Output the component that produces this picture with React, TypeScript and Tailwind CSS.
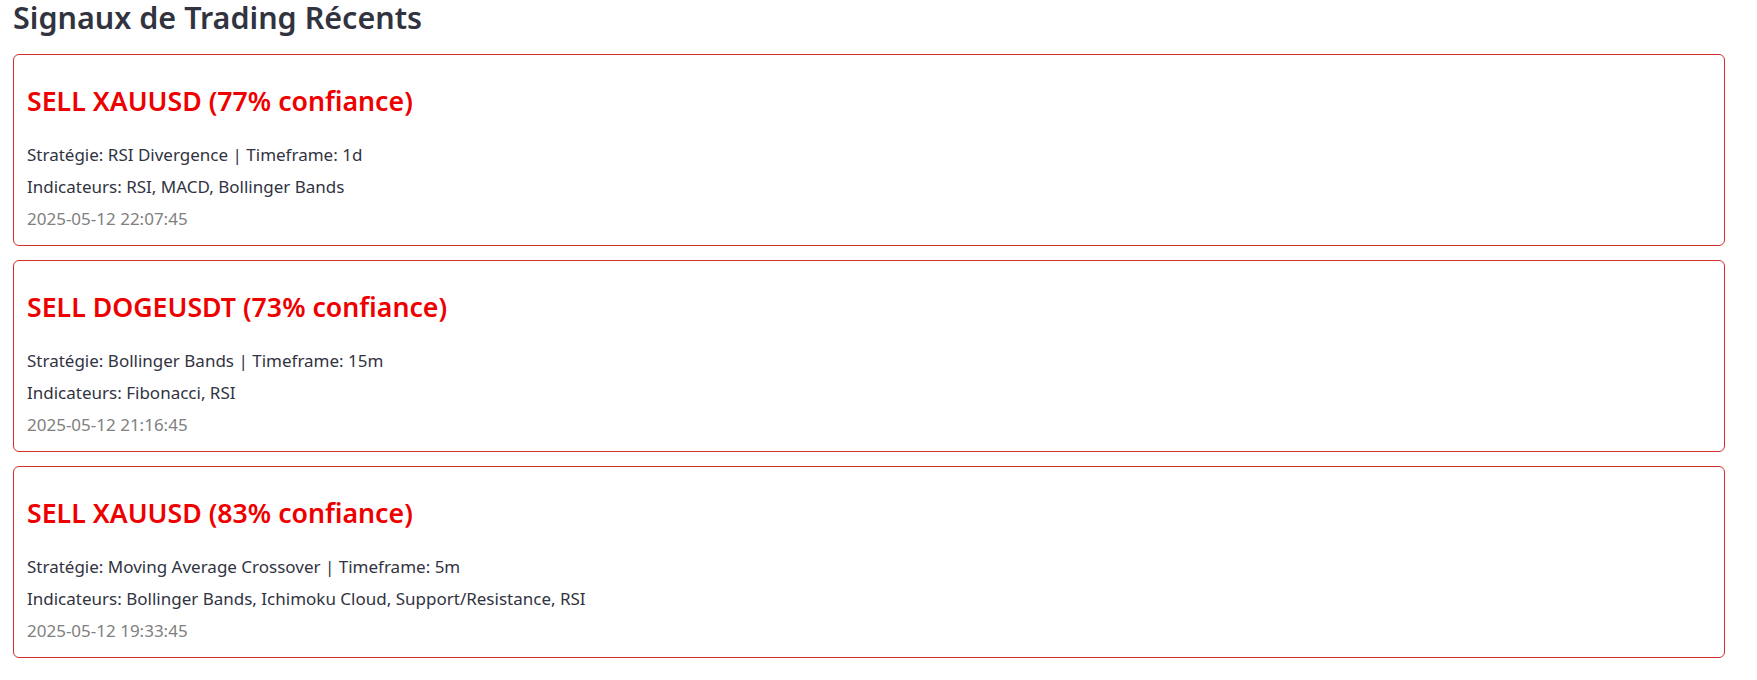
import React from "react";

type Signal = {
  action: string;
  symbol: string;
  confidence: number;
  strategy: string;
  timeframe: string;
  indicators: string;
  time: string;
};

const signals: Signal[] = [
  {
    action: "SELL",
    symbol: "XAUUSD",
    confidence: 77,
    strategy: "RSI Divergence",
    timeframe: "1d",
    indicators: "RSI, MACD, Bollinger Bands",
    time: "2025-05-12 22:07:45",
  },
  {
    action: "SELL",
    symbol: "DOGEUSDT",
    confidence: 73,
    strategy: "Bollinger Bands",
    timeframe: "15m",
    indicators: "Fibonacci, RSI",
    time: "2025-05-12 21:16:45",
  },
  {
    action: "SELL",
    symbol: "XAUUSD",
    confidence: 83,
    strategy: "Moving Average Crossover",
    timeframe: "5m",
    indicators: "Bollinger Bands, Ichimoku Cloud, Support/Resistance, RSI",
    time: "2025-05-12 19:33:45",
  },
];

export default function App() {
  return (
    <div
      className="w-[1757px] h-[680px] bg-white pl-[13px] overflow-hidden"
      style={{ fontFamily: "'Noto Sans', Roboto, sans-serif" }}
    >
      <h2 className="text-[30.5px] leading-[34px] font-semibold text-[#31333f] m-0">
        Signaux de Trading Récents
      </h2>
      <div className="mt-[20px] flex flex-col gap-[14px] w-[1712px]">
        {signals.map((s, i) => (
          <div
            key={i}
            className="border border-[#d32f2f] rounded-[6px] pl-[13px] pt-[30px] pb-[10px]"
          >
            <div className="text-[26.7px] leading-[32px] font-semibold text-[#ee0000]">
              {s.action} {s.symbol} ({s.confidence}% confiance)
            </div>
            <div className="mt-[22px] text-[17px] leading-[32px] text-[#31333f]">
              Stratégie: {s.strategy} | Timeframe: {s.timeframe}
            </div>
            <div className="text-[17px] leading-[32px] text-[#31333f]">
              Indicateurs: {s.indicators}
            </div>
            <div className="text-[17px] leading-[32px] text-[#808080]">{s.time}</div>
          </div>
        ))}
      </div>
    </div>
  );
}
